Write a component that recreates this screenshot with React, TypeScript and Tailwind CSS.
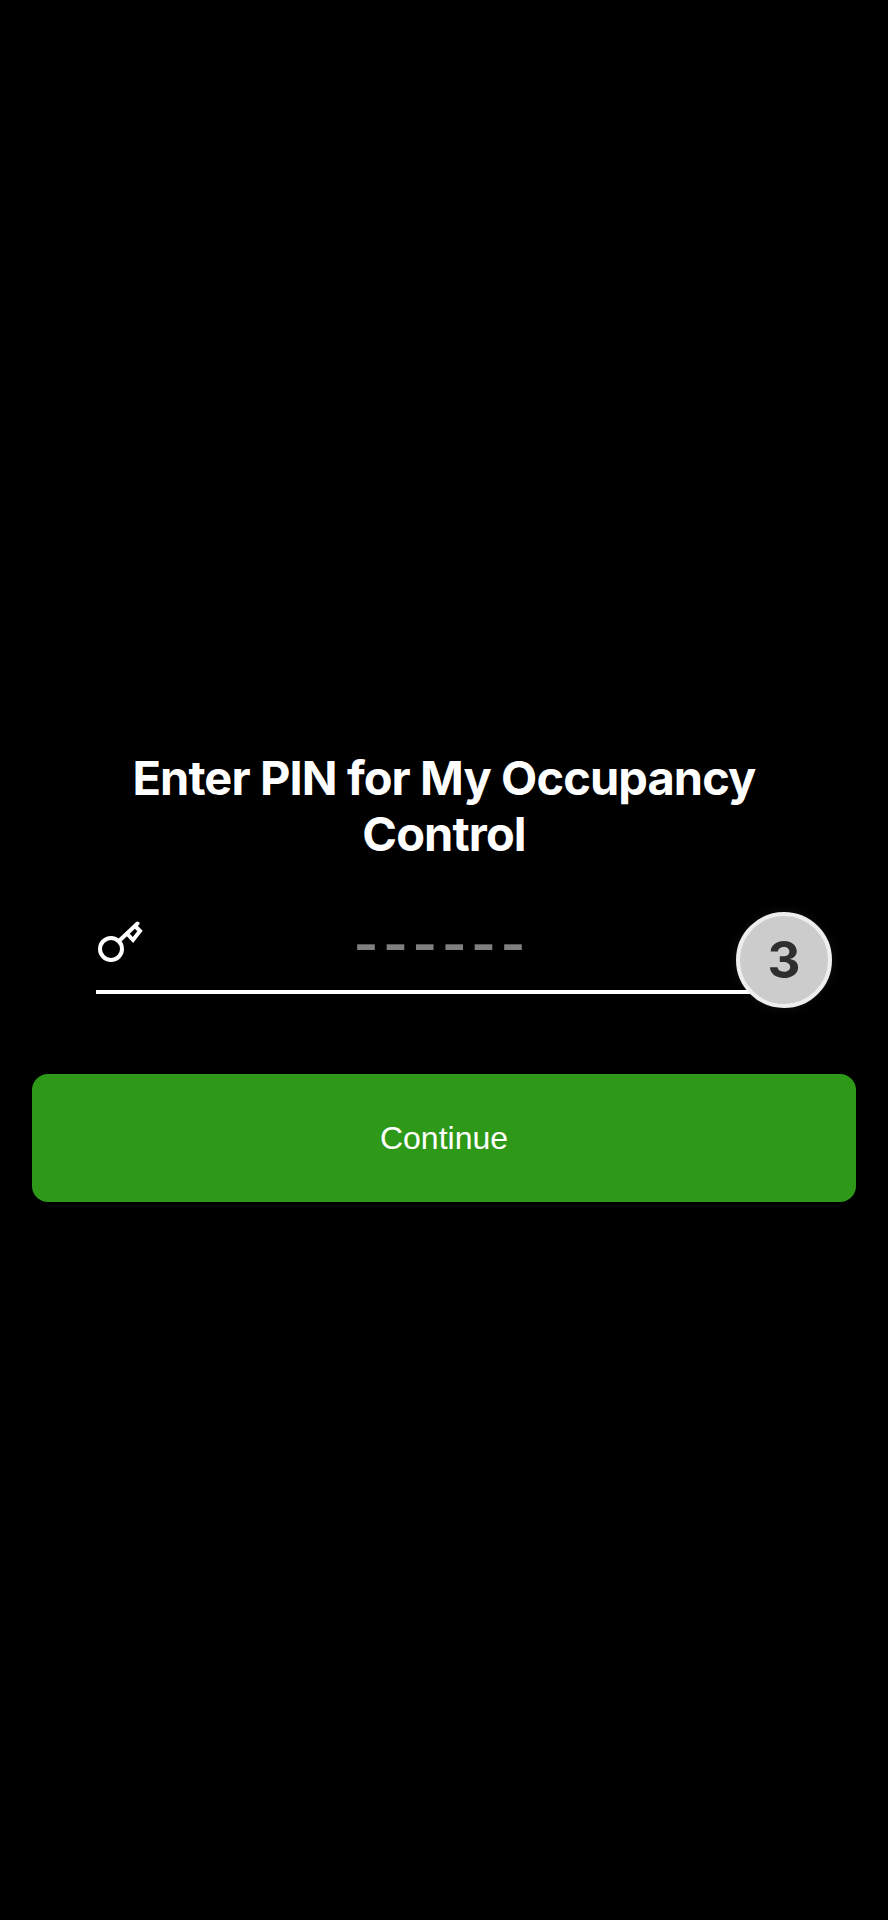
export default function App() {
  return (
    <div className="w-[888px] h-[1920px] bg-black flex flex-col items-center pt-[750px] font-['Inter','Liberation_Sans',sans-serif]">
      <h1 className="w-[700px] text-center text-white font-bold text-[47px] leading-[56px] tracking-[-0.9px]">
        Enter PIN for My Occupancy Control
      </h1>
      <div className="relative w-[824px] h-[106px] mt-[50px] shrink-0">
        <div className="ml-[64px] w-[660px] h-[82px] border-b-4 border-white flex items-start">
          <svg className="shrink-0 mt-0" width="50" height="52" viewBox="0 0 50 52" fill="none" stroke="white" strokeWidth="4">
            <circle cx="15" cy="37" r="11" />
            <path d="M23 29 L41.5 11.5" strokeLinecap="round" />
            <path d="M30 20.5 L37 28 L44 19 L38.5 13.5" strokeLinejoin="miter" />
          </svg>
          <div className="ml-[208px] mt-[-7px] text-[#808080] font-['Liberation_Sans',sans-serif] text-[72px] leading-[72px] tracking-[5.4px] whitespace-nowrap">------</div>
        </div>
        <div className="absolute left-[704px] top-0 w-[96px] h-[96px] rounded-full bg-[#cccccc] border-4 border-[#eeeeee] flex items-center justify-center text-[#2e2e2e] font-bold text-[51px] shadow-[0_0_10px_rgba(255,255,255,0.08)]">3</div>
      </div>
      <button className="w-[824px] h-[128px] mt-[56px] shrink-0 rounded-2xl bg-[#2e9918] text-white text-[32px] font-['Liberation_Sans',sans-serif]">Continue</button>
    </div>
  );
}
